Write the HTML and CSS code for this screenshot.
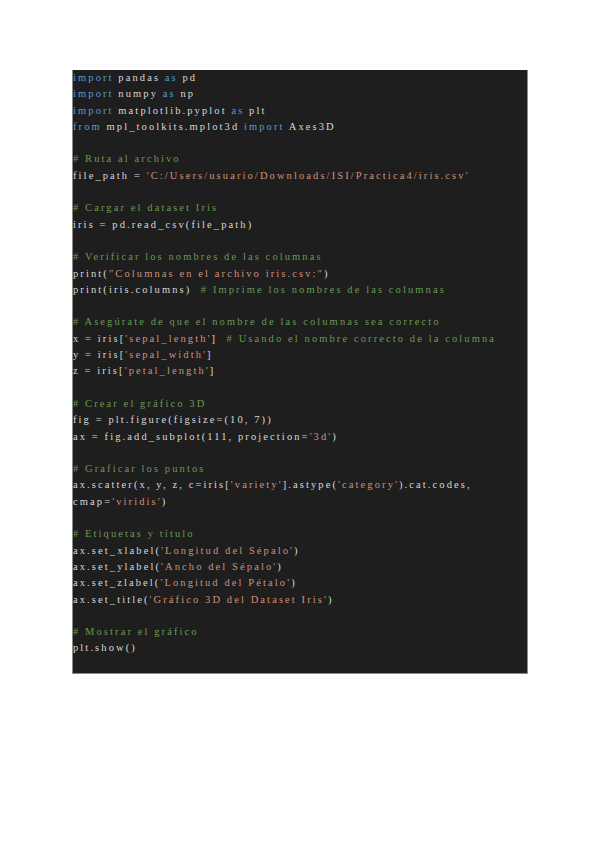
FILE: index.html
```html
<!DOCTYPE html>
<html>
<head>
<meta charset="utf-8">
<link rel="stylesheet" href="styles.css">
</head>
<body>
<div class="page">
<pre class="code"><span class="kw">import</span> pandas <span class="kw">as</span> pd
<span class="kw">import</span> numpy <span class="kw">as</span> np
<span class="kw">import</span> matplotlib.pyplot <span class="kw">as</span> plt
<span class="kw">from</span> mpl_toolkits.mplot3d <span class="kw">import</span> Axes3D

<span class="cm"># Ruta al archivo</span>
file_path = <span class="st">'C:/Users/usuario/Downloads/ISI/Practica4/iris.csv'</span>

<span class="cm"># Cargar el dataset Iris</span>
iris = pd.read_csv(file_path)

<span class="cm"># Verificar los nombres de las columnas</span>
print(<span class="st">"Columnas en el archivo iris.csv:"</span>)
print(iris.columns)  <span class="cm"># Imprime los nombres de las columnas</span>

<span class="cm"># Asegúrate de que el nombre de las columnas sea correcto</span>
x = iris[<span class="st">'sepal_length'</span>]  <span class="cm"># Usando el nombre correcto de la columna</span>
y = iris[<span class="st">'sepal_width'</span>]
z = iris[<span class="st">'petal_length'</span>]

<span class="cm"># Crear el gráfico 3D</span>
fig = plt.figure(figsize=(10, 7))
ax = fig.add_subplot(111, projection=<span class="st">'3d'</span>)

<span class="cm"># Graficar los puntos</span>
ax.scatter(x, y, z, c=iris[<span class="st">'variety'</span>].astype(<span class="st">'category'</span>).cat.codes,
cmap=<span class="st">'viridis'</span>)

<span class="cm"># Etiquetas y título</span>
ax.set_xlabel(<span class="st">'Longitud del Sépalo'</span>)
ax.set_ylabel(<span class="st">'Ancho del Sépalo'</span>)
ax.set_zlabel(<span class="st">'Longitud del Pétalo'</span>)
ax.set_title(<span class="st">'Gráfico 3D del Dataset Iris'</span>)

<span class="cm"># Mostrar el gráfico</span>
plt.show()

</pre>
</div>
</body>
</html>
```

FILE: styles.css
```css
html, body {
  margin: 0;
  padding: 0;
  background: #ffffff;
}

.page {
  padding: 70px 72px 0 72px;
}

.code {
  margin: 0;
  width: 456px;
  height: 604px;
  box-sizing: border-box;
  background: #1e1e1e;
  border-left: 1px solid #8a8a8a;
  border-right: 1px solid #8a8a8a;
  border-bottom: 1px solid #8a8a8a;
  padding: 0;
  font-family: "Liberation Serif", serif;
  font-size: 10.5px;
  letter-spacing: 2.1px;
  line-height: 16.3px;
  color: #d8d8d8;
  white-space: pre;
  overflow: hidden;
}

.kw { color: #569cd6; }
.cm { color: #6a9955; }
.st { color: #ce9178; }
```
